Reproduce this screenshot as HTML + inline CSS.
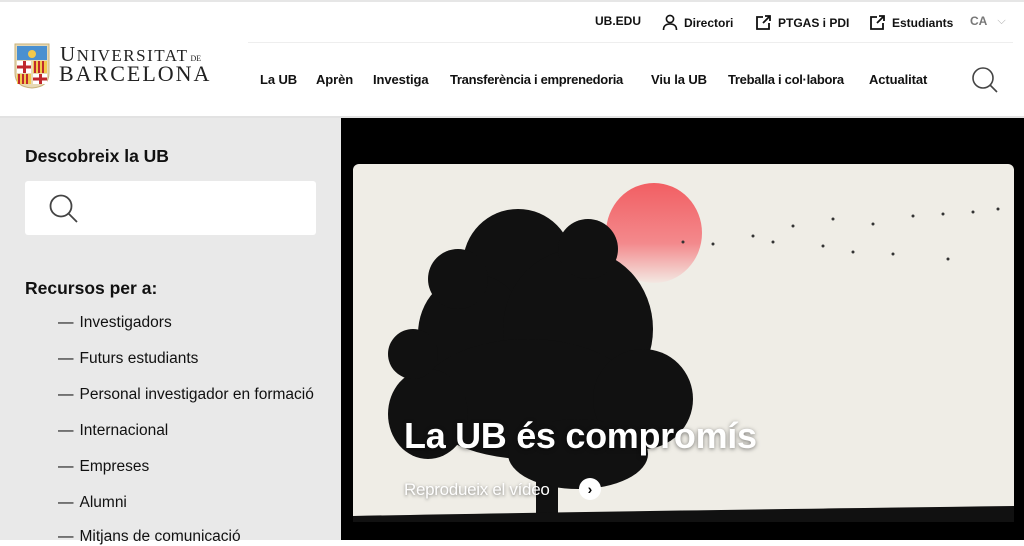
<!DOCTYPE html>
<html><head><meta charset="utf-8"><style>
*{margin:0;padding:0;box-sizing:border-box}
body{width:1024px;height:540px;overflow:hidden;font-family:"Liberation Sans",Arial,sans-serif;background:#fff;position:relative;color:#111}
.top{position:absolute;top:0;left:0;width:1024px;height:2px;background:#e6e6e6}
.util{position:absolute;top:14px;font-size:12px;font-weight:bold;color:#111;display:flex;align-items:center;gap:6px}
.sep{position:absolute;left:248px;top:42px;width:765px;height:1px;background:#eee}
.nav{position:absolute;top:72px;font-size:13px;font-weight:bold;letter-spacing:-0.1px}
.hb{position:absolute;top:116px;left:0;width:1024px;height:2px;background:#e2e2e2}
.left{position:absolute;top:118px;left:0;width:341px;height:422px;background:#e9e9e9}
.right{position:absolute;top:118px;left:341px;width:683px;height:422px;background:#000}
h3{position:absolute;font-size:17.5px;font-weight:bold;color:#111}
.search{position:absolute;left:25px;top:181px;width:291px;height:54px;background:#fff;border-radius:3px}
.li{position:absolute;left:58px;font-size:15.5px;color:#111}
.li b{font-weight:normal;margin-right:6px}
</style></head><body>
<div class="top"></div>
<svg style="position:absolute;left:14px;top:43px" width="36" height="46" viewBox="0 0 36 46">
<path d="M1 1H35V30Q35 44 18 45Q1 44 1 30Z" fill="#e7d9b5" stroke="#c9b27a"/>
<rect x="3" y="3" width="30" height="14" fill="#4a90d0"/>
<circle cx="18" cy="11" r="4" fill="#f2c94c"/>
<rect x="3" y="18" width="14" height="12" fill="#fff"/><rect x="9" y="18" width="3" height="12" fill="#c0282d"/><rect x="3" y="22.5" width="14" height="3" fill="#c0282d"/>
<rect x="19" y="18" width="14" height="12" fill="#f2c94c"/><path d="M21 18V30M25 18V30M29 18V30" stroke="#c0282d" stroke-width="2"/>
<rect x="3" y="31" width="14" height="10" fill="#f2c94c"/><path d="M5 31V41M9 31V41M13 31V41" stroke="#c0282d" stroke-width="2"/>
<rect x="19" y="31" width="14" height="10" fill="#fff"/><rect x="25" y="31" width="3" height="10" fill="#c0282d"/><rect x="19" y="34.5" width="14" height="3" fill="#c0282d"/>
</svg>
<div style="position:absolute;left:60px;top:44px;font-family:'Liberation Serif',serif;font-size:21px;letter-spacing:1.5px;color:#222;line-height:21px">U<span style="font-size:17px">NIVERSITAT</span><span style="font-size:8px;letter-spacing:0"> DE</span></div>
<div style="position:absolute;left:59px;top:63px;font-family:'Liberation Serif',serif;font-size:22px;letter-spacing:2px;color:#222;line-height:22px">BARCELONA</div>

<div class="util" style="left:595px">UB.EDU</div>
<div class="util" style="left:662px"><svg width="16" height="17" viewBox="0 0 16 17" fill="none" stroke="#111" stroke-width="1.6"><circle cx="8" cy="5" r="3.6"/><path d="M1.5 16Q1.5 10 8 10Q14.5 10 14.5 16"/></svg>Directori</div>
<div class="util" style="left:755px"><svg width="17" height="17" viewBox="0 0 17 17" fill="none" stroke="#111" stroke-width="1.8"><path d="M8 3H2V15H14V9"/><path d="M8 9L15 2M10 2H15V7"/></svg>PTGAS i PDI</div>
<div class="util" style="left:869px"><svg width="17" height="17" viewBox="0 0 17 17" fill="none" stroke="#111" stroke-width="1.8"><path d="M8 3H2V15H14V9"/><path d="M8 9L15 2M10 2H15V7"/></svg>Estudiants</div>
<div class="util" style="left:970px;color:#777">CA <span style="color:#aaa;font-weight:normal;font-size:11px;margin-left:4px">⌵</span></div>
<div class="sep"></div>
<div class="nav" style="left:260px">La UB</div>
<div class="nav" style="left:316px">Aprèn</div>
<div class="nav" style="left:373px">Investiga</div>
<div class="nav" style="left:450px;letter-spacing:-0.3px">Transferència i emprenedoria</div>
<div class="nav" style="left:651px">Viu la UB</div>
<div class="nav" style="left:728px;letter-spacing:-0.3px">Treballa i col·labora</div>
<div class="nav" style="left:869px">Actualitat</div>
<svg style="position:absolute;left:971px;top:66px" width="28" height="28" viewBox="0 0 28 28" fill="none" stroke="#444" stroke-width="1.6"><circle cx="12" cy="12" r="10"/><path d="M19 19L26 26"/></svg>
<div class="hb"></div>

<div class="left"></div>
<h3 style="left:25px;top:146px">Descobreix la UB</h3>
<div class="search"><svg style="position:absolute;left:23px;top:12px" width="32" height="32" viewBox="0 0 32 32" fill="none" stroke="#444" stroke-width="1.8"><circle cx="13" cy="13" r="10.5"/><path d="M20.5 20.5L29 29"/></svg></div>
<h3 style="left:25px;top:278px">Recursos per a:</h3>
<div class="li" style="top:314px"><b>—</b>Investigadors</div>
<div class="li" style="top:350px"><b>—</b>Futurs estudiants</div>
<div class="li" style="top:386px"><b>—</b>Personal investigador en formació</div>
<div class="li" style="top:422px"><b>—</b>Internacional</div>
<div class="li" style="top:458px"><b>—</b>Empreses</div>
<div class="li" style="top:494px"><b>—</b>Alumni</div>
<div class="li" style="top:528px"><b>—</b>Mitjans de comunicació</div>

<div class="right"></div>
<svg style="position:absolute;left:353px;top:164px" width="661" height="358" viewBox="0 0 661 358">
<defs><linearGradient id="s" x1="0" y1="0" x2="0" y2="1"><stop offset="0" stop-color="#f25f63"/><stop offset="0.6" stop-color="#f3898c"/><stop offset="1" stop-color="#f3e8e2"/></linearGradient></defs>
<rect width="661" height="358" rx="6" fill="#efede6"/>
<ellipse cx="301" cy="69" rx="48" ry="50" fill="url(#s)"/>
<g fill="#111">
<ellipse cx="165" cy="100" rx="55" ry="55"/><ellipse cx="120" cy="170" rx="55" ry="60"/><ellipse cx="225" cy="165" rx="75" ry="80"/>
<ellipse cx="175" cy="235" rx="110" ry="60"/><ellipse cx="75" cy="250" rx="40" ry="45"/><ellipse cx="290" cy="235" rx="50" ry="50"/>
<ellipse cx="235" cy="85" rx="30" ry="30"/><ellipse cx="105" cy="115" rx="30" ry="30"/><ellipse cx="225" cy="290" rx="70" ry="35"/><ellipse cx="60" cy="190" rx="25" ry="25"/>
<rect x="183" y="280" width="22" height="78"/>
<path d="M0 352Q200 348 661 342V358H0Z"/>
</g>
<g fill="#333"><circle cx="330" cy="78" r="1.5"/><circle cx="360" cy="80" r="1.5"/><circle cx="400" cy="72" r="1.5"/><circle cx="440" cy="62" r="1.5"/><circle cx="480" cy="55" r="1.5"/><circle cx="520" cy="60" r="1.5"/><circle cx="560" cy="52" r="1.5"/><circle cx="590" cy="50" r="1.5"/><circle cx="620" cy="48" r="1.5"/><circle cx="645" cy="45" r="1.5"/><circle cx="470" cy="82" r="1.5"/><circle cx="500" cy="88" r="1.5"/><circle cx="540" cy="90" r="1.5"/><circle cx="595" cy="95" r="1.5"/><circle cx="420" cy="78" r="1.5"/></g>
</svg>
<div style="position:absolute;left:404px;top:415px;font-size:36px;font-weight:bold;color:#fff;letter-spacing:-0.3px;text-shadow:0 1px 4px rgba(0,0,0,.5)">La UB és compromís</div>
<div style="position:absolute;left:404px;top:480px;font-size:17px;color:#fff;letter-spacing:-0.3px;text-shadow:0 1px 3px rgba(0,0,0,.5)">Reprodueix el vídeo</div>
<div style="position:absolute;left:579px;top:478px;width:22px;height:22px;border-radius:50%;background:#fff;color:#000;font-size:14px;font-weight:bold;text-align:center;line-height:22px">›</div>
</body></html>
